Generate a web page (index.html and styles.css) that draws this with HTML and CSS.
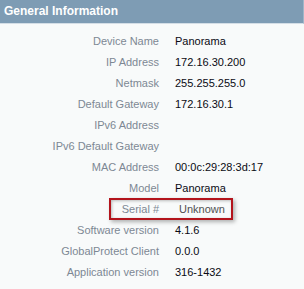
FILE: index.html
```html
<!DOCTYPE html>
<html>
<head>
<meta charset="utf-8">
<link rel="stylesheet" href="styles.css">
</head>
<body>
<div class="panel">
  <div class="panel-header">General Information</div>
  <div class="info">
    <div class="row"><span class="label">Device Name</span><span class="value">Panorama</span></div>
    <div class="row"><span class="label">IP Address</span><span class="value">172.16.30.200</span></div>
    <div class="row"><span class="label">Netmask</span><span class="value">255.255.255.0</span></div>
    <div class="row"><span class="label">Default Gateway</span><span class="value">172.16.30.1</span></div>
    <div class="row"><span class="label">IPv6 Address</span><span class="value"></span></div>
    <div class="row"><span class="label">IPv6 Default Gateway</span><span class="value"></span></div>
    <div class="row"><span class="label">MAC Address</span><span class="value">00:0c:29:28:3d:17</span></div>
    <div class="row"><span class="label">Model</span><span class="value">Panorama</span></div>
    <div class="row highlighted"><span class="label">Serial #</span><span class="value muted">Unknown</span></div>
    <div class="row"><span class="label">Software version</span><span class="value">4.1.6</span></div>
    <div class="row"><span class="label">GlobalProtect Client</span><span class="value">0.0.0</span></div>
    <div class="row"><span class="label">Application version</span><span class="value">316-1432</span></div>
  </div>
</div>
</body>
</html>
```

FILE: styles.css
```css
html, body {
  margin: 0;
  padding: 0;
  background: #f8fafa;
}
body {
  width: 304px;
  height: 289px;
  overflow: hidden;
  font-family: "Liberation Sans", Arial, sans-serif;
}
.panel {
  display: flex;
  flex-direction: column;
}
.panel-header {
  height: 24px;
  line-height: 23px;
  background: #7e9cb4;
  color: #ffffff;
  font-weight: bold;
  font-size: 12px;
  padding-left: 4px;
  border-bottom: 1px solid #d4dee6;
  border-right: 1px solid #9fb6c8;
  box-sizing: border-box;
}
.info {
  padding-top: 7px;
  display: flex;
  flex-direction: column;
}
.row {
  position: relative;
  display: grid;
  grid-template-columns: 159px 1fr;
  column-gap: 16px;
  height: 21px;
  line-height: 21px;
  font-size: 11px;
}
.label {
  text-align: right;
  color: #7d8894;
}
.value {
  color: #0a0a14;
}
.value.muted {
  color: #505050;
  padding-left: 4px;
}
.highlighted::after {
  content: "";
  position: absolute;
  left: 109px;
  top: -1px;
  width: 124px;
  height: 22px;
  box-sizing: border-box;
  border: 2px solid #b3141c;
  box-shadow: 2px 2px 4px rgba(0, 0, 0, 0.3), inset 1px 1px 3px rgba(0, 0, 0, 0.25);
}
```
